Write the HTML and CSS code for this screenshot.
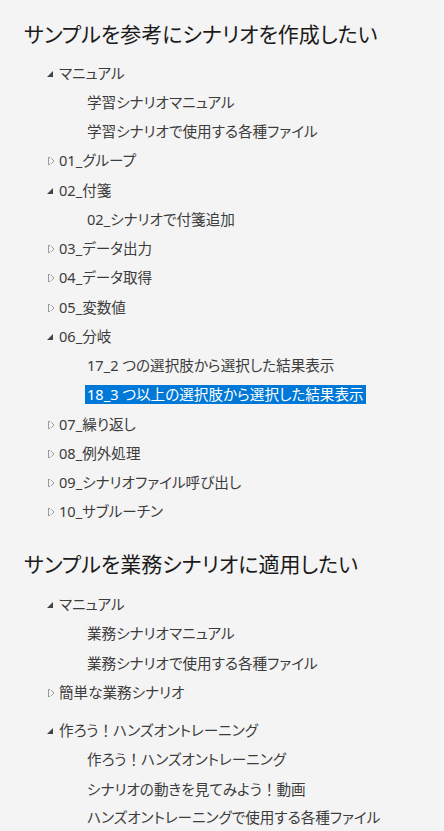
FILE: index.html
```html
<!DOCTYPE html>
<html>
<head>
	<meta charset="UTF-8">
	<title>シナリオ</title>
	<link rel="stylesheet" href="styles.css">
</head>
<body>
<div id="box">
    <h2 class="title">サンプルを参考にシナリオを作成したい</h2>
    <ul class="tree">
        <li class="open"><div class="row"><span class="tri"></span><a href="javascript:;">マニュアル</a></div>
            <ul>
                <li><div class="row"><a href="javascript:;">学習シナリオマニュアル</a></div></li>
                <li><div class="row"><a href="javascript:;">学習シナリオで使用する各種ファイル</a></div></li>
            </ul>
        </li>
        <li class="shut"><div class="row"><span class="tri"></span><a href="javascript:;">01_グループ</a></div></li>
        <li class="open"><div class="row"><span class="tri"></span><a href="javascript:;">02_付箋</a></div>
            <ul>
                <li><div class="row"><a href="javascript:;">02_シナリオで付箋追加</a></div></li>
            </ul>
        </li>
        <li class="shut"><div class="row"><span class="tri"></span><a href="javascript:;">03_データ出力</a></div></li>
        <li class="shut"><div class="row"><span class="tri"></span><a href="javascript:;">04_データ取得</a></div></li>
        <li class="shut"><div class="row"><span class="tri"></span><a href="javascript:;">05_変数値</a></div></li>
        <li class="open"><div class="row"><span class="tri"></span><a href="javascript:;">06_分岐</a></div>
            <ul>
                <li><div class="row"><a href="javascript:;">17_2 つの選択肢から選択した結果表示</a></div></li>
                <li><div class="row"><a href="javascript:;" class="select">18_3 つ以上の選択肢から選択した結果表示</a></div></li>
            </ul>
        </li>
        <li class="shut"><div class="row"><span class="tri"></span><a href="javascript:;">07_繰り返し</a></div></li>
        <li class="shut"><div class="row"><span class="tri"></span><a href="javascript:;">08_例外処理</a></div></li>
        <li class="shut"><div class="row"><span class="tri"></span><a href="javascript:;">09_シナリオファイル呼び出し</a></div></li>
        <li class="shut"><div class="row"><span class="tri"></span><a href="javascript:;">10_サブルーチン</a></div></li>
    </ul>

    <h2 class="title second">サンプルを業務シナリオに適用したい</h2>
    <ul class="tree tree2">
        <li class="open"><div class="row"><span class="tri"></span><a href="javascript:;">マニュアル</a></div>
            <ul>
                <li><div class="row"><a href="javascript:;">業務シナリオマニュアル</a></div></li>
                <li><div class="row"><a href="javascript:;">業務シナリオで使用する各種ファイル</a></div></li>
            </ul>
        </li>
        <li class="shut"><div class="row"><span class="tri"></span><a href="javascript:;">簡単な業務シナリオ</a></div></li>
    </ul>
    <ul class="tree gap">
        <li class="open"><div class="row"><span class="tri"></span><a href="javascript:;">作ろう<span class="fw">！</span>ハンズオントレーニング</a></div>
            <ul>
                <li><div class="row"><a href="javascript:;">作ろう<span class="fw">！</span>ハンズオントレーニング</a></div></li>
                <li><div class="row"><a href="javascript:;">シナリオの動きを見てみよう<span class="fw">！</span>動画</a></div></li>
                <li><div class="row"><a href="javascript:;">ハンズオントレーニングで使用する各種ファイル</a></div></li>
            </ul>
        </li>
    </ul>
</div>
</body>
</html>
```

FILE: styles.css
```css
        html,body{
            margin: 0;
            padding: 0;
            background-color: #f4f4f4;
        }
        body{
            font-family: "Noto Sans", "Noto Sans CJK JP", sans-serif;
            font-feature-settings: "palt";
            color: #3c3c3c;
        }
        #box{
            padding: 19px 0 0 24px;
        }
        .title{
            margin: 0;
            font-size: 21px;
            font-weight: normal;
            line-height: 28px;
            color: #1b1b1b;
            font-family: "Noto Sans CJK JP", sans-serif;
        }
        .second{
            margin-top: 22px;
        }
        ul{
            margin: 0;
            padding: 0;
        }
        li{
            list-style: none;
        }
        .tree{
            margin-top: 11.5px;
            padding-left: 21px;
        }
        .tree2{
            margin-top: 13.5px;
        }
        .tree.gap{
            margin-top: 8.5px;
        }
        .row{
            display: flex;
            align-items: center;
            height: 29.25px;
            position: relative;
            padding-left: 14px;
        }
        .tree li ul .row{
            padding-left: 42px;
        }
        a{
            font-size: 14.6px;
            line-height: 19px;
            text-decoration: none;
            color: #3c3c3c;
        }
        .fw{
            font-family: "Noto Sans CJK JP", sans-serif;
            font-feature-settings: normal;
        }
        .tree li li a{
            padding: 0 2px;
            margin-left: -2px;
        }
        .tri{
            position: absolute;
            left: 2px;
            top: 12px;
            width: 0;
            height: 0;
        }
        .open > .row > .tri{
            border-style: solid;
            border-width: 0 0 6px 6px;
            border-color: transparent transparent #444 transparent;
        }
        .shut > .row > .tri{
            left: 3px;
            top: 11px;
            width: 6px;
            height: 8px;
            background: linear-gradient(to top right, transparent 46%, #9a9a9a 47%, #9a9a9a 56%, transparent 57%) top / 100% 50% no-repeat,
                        linear-gradient(to bottom right, transparent 46%, #9a9a9a 47%, #9a9a9a 56%, transparent 57%) bottom / 100% 50% no-repeat;
            border-left: 1px solid #9a9a9a;
            box-sizing: border-box;
        }
        .select{
            background-color: #0078d7;
            color: white !important;
        }
```
